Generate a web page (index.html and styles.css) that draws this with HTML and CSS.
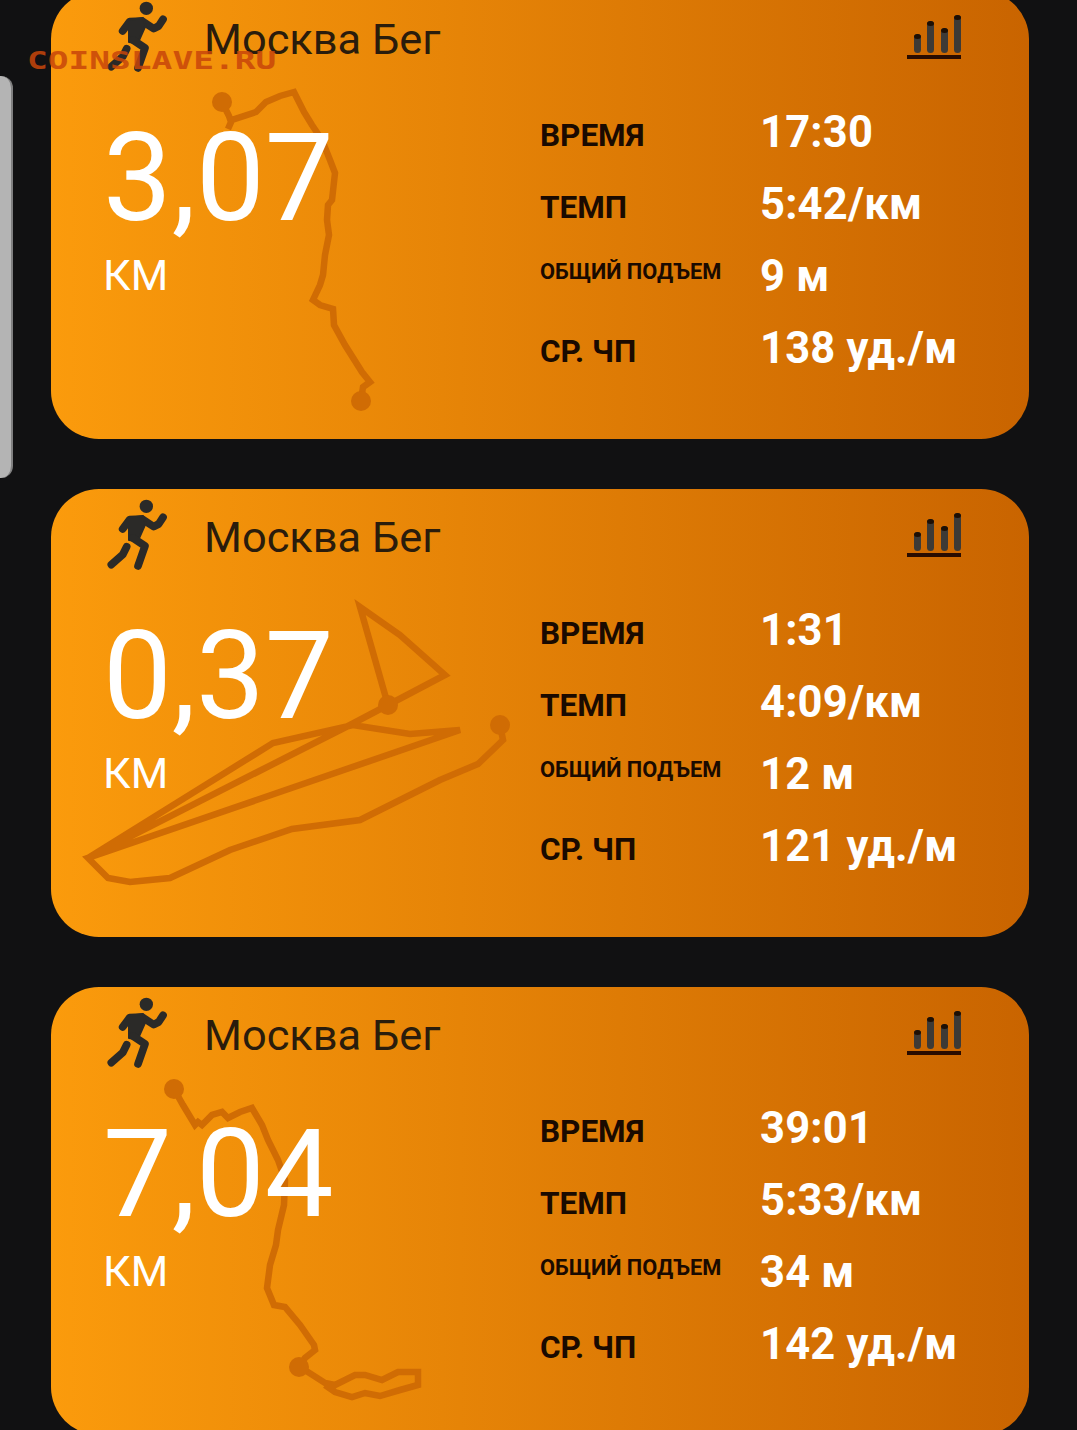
FILE: index.html
```html
<!DOCTYPE html>
<html>
<head>
    <meta charset="utf-8" />
    <title>Москва Бег</title>
    <link rel="stylesheet" href="styles.css">
</head>
<body class="body">
    <div class="sideHandle"></div>
    <div class="watermark">COINSLAVE.RU</div>

    <div class="list">
        <div class="card">
            <svg class="route" viewBox="51 -9 978 448">
                <polyline points="222,102 229,116 231,122 228,129 232,120 256,112 266,102 280,96 294,92 304,112 312,125 322,140 330,160 335,173 332,200 328,205 327,220 329,235 325,255 323,275 320,285 313,300 320,305 333,309 334,325 345,345 362,372 370,382 363,387 361,400" />
                <circle cx="222" cy="102" r="10" />
                <circle cx="361" cy="401" r="10" />
            </svg>
            <div class="cardHead">
                <svg class="runner" viewBox="50 25 180 216">
                    <circle class="runnerHead" cx="168" cy="47" r="20" />
                    <path class="limb" d="M97 115 L118 87 L155 85 L190 108 L205 100 L218 80" />
                    <polygon class="runnerBody" points="116,82 158,76 166,98 142,152 116,148" />
                    <path class="limb" d="M128 142 L164 166 L143 226" />
                    <path class="limb" d="M109 168 L97 192 L63 222" />
                </svg>
                <span class="title">Москва Бег</span>
                <svg class="chartIcon" viewBox="0 0 54 44">
                    <rect class="bar" x="7" y="19" width="7" height="19" rx="3.5" />
                    <rect class="barCap" x="7" y="19" width="7" height="5" rx="3.5" />
                    <rect class="bar" x="20" y="6" width="7" height="32" rx="3.5" />
                    <rect class="barCap" x="20" y="6" width="7" height="5" rx="3.5" />
                    <rect class="bar" x="34" y="13" width="7" height="25" rx="3.5" />
                    <rect class="barCap" x="34" y="13" width="7" height="5" rx="3.5" />
                    <rect class="bar" x="47" y="0" width="7" height="38" rx="3.5" />
                    <rect class="barCap" x="47" y="0" width="7" height="5" rx="3.5" />
                    <rect class="baseLine" x="0" y="40" width="54" height="4" />
                </svg>
            </div>
            <div class="cardBody">
                <div class="distance">
                    <div class="distanceValue">3,07</div>
                    <div class="distanceUnit">КМ</div>
                </div>
                <div class="stats">
                    <div class="label">ВРЕМЯ</div><div class="value">17:30</div>
                    <div class="label">ТЕМП</div><div class="value">5:42/км</div>
                    <div class="label small">ОБЩИЙ ПОДЪЕМ</div><div class="value">9 м</div>
                    <div class="label">СР. ЧП</div><div class="value">138 уд./м</div>
                </div>
            </div>
        </div>

        <div class="card">
            <svg class="route" viewBox="51 489 978 448">
                <polyline points="500,725 503,740 478,764 440,780 360,820 292,829 230,850 170,878 130,882 108,878 88,858 460,730 410,734 353,725 273,743 88,858 350,725 388,705 360,607 400,635 445,675 388,705" />
                <circle cx="500" cy="725" r="10" />
                <circle cx="388" cy="705" r="10" />
            </svg>
            <div class="cardHead">
                <svg class="runner" viewBox="50 25 180 216">
                    <circle class="runnerHead" cx="168" cy="47" r="20" />
                    <path class="limb" d="M97 115 L118 87 L155 85 L190 108 L205 100 L218 80" />
                    <polygon class="runnerBody" points="116,82 158,76 166,98 142,152 116,148" />
                    <path class="limb" d="M128 142 L164 166 L143 226" />
                    <path class="limb" d="M109 168 L97 192 L63 222" />
                </svg>
                <span class="title">Москва Бег</span>
                <svg class="chartIcon" viewBox="0 0 54 44">
                    <rect class="bar" x="7" y="19" width="7" height="19" rx="3.5" />
                    <rect class="barCap" x="7" y="19" width="7" height="5" rx="3.5" />
                    <rect class="bar" x="20" y="6" width="7" height="32" rx="3.5" />
                    <rect class="barCap" x="20" y="6" width="7" height="5" rx="3.5" />
                    <rect class="bar" x="34" y="13" width="7" height="25" rx="3.5" />
                    <rect class="barCap" x="34" y="13" width="7" height="5" rx="3.5" />
                    <rect class="bar" x="47" y="0" width="7" height="38" rx="3.5" />
                    <rect class="barCap" x="47" y="0" width="7" height="5" rx="3.5" />
                    <rect class="baseLine" x="0" y="40" width="54" height="4" />
                </svg>
            </div>
            <div class="cardBody">
                <div class="distance">
                    <div class="distanceValue">0,37</div>
                    <div class="distanceUnit">КМ</div>
                </div>
                <div class="stats">
                    <div class="label">ВРЕМЯ</div><div class="value">1:31</div>
                    <div class="label">ТЕМП</div><div class="value">4:09/км</div>
                    <div class="label small">ОБЩИЙ ПОДЪЕМ</div><div class="value">12 м</div>
                    <div class="label">СР. ЧП</div><div class="value">121 уд./м</div>
                </div>
            </div>
        </div>

        <div class="card">
            <svg class="route" viewBox="51 987 978 448">
                <polyline points="174,1089 183,1105 195,1125 198,1122 202,1125 212,1115 222,1112 228,1118 240,1112 252,1108 262,1125 268,1140 278,1160 285,1180 284,1205 278,1230 276,1245 270,1265 267,1288 274,1305 285,1307 300,1325 314,1345 315,1350 305,1358 300,1367 325,1383 335,1385 355,1375 365,1375 382,1380 398,1372 418,1372 418,1385 400,1390 380,1396 365,1393 352,1397 335,1392 325,1385" />
                <circle cx="174" cy="1089" r="10" />
                <circle cx="299" cy="1367" r="10" />
            </svg>
            <div class="cardHead">
                <svg class="runner" viewBox="50 25 180 216">
                    <circle class="runnerHead" cx="168" cy="47" r="20" />
                    <path class="limb" d="M97 115 L118 87 L155 85 L190 108 L205 100 L218 80" />
                    <polygon class="runnerBody" points="116,82 158,76 166,98 142,152 116,148" />
                    <path class="limb" d="M128 142 L164 166 L143 226" />
                    <path class="limb" d="M109 168 L97 192 L63 222" />
                </svg>
                <span class="title">Москва Бег</span>
                <svg class="chartIcon" viewBox="0 0 54 44">
                    <rect class="bar" x="7" y="19" width="7" height="19" rx="3.5" />
                    <rect class="barCap" x="7" y="19" width="7" height="5" rx="3.5" />
                    <rect class="bar" x="20" y="6" width="7" height="32" rx="3.5" />
                    <rect class="barCap" x="20" y="6" width="7" height="5" rx="3.5" />
                    <rect class="bar" x="34" y="13" width="7" height="25" rx="3.5" />
                    <rect class="barCap" x="34" y="13" width="7" height="5" rx="3.5" />
                    <rect class="bar" x="47" y="0" width="7" height="38" rx="3.5" />
                    <rect class="barCap" x="47" y="0" width="7" height="5" rx="3.5" />
                    <rect class="baseLine" x="0" y="40" width="54" height="4" />
                </svg>
            </div>
            <div class="cardBody">
                <div class="distance">
                    <div class="distanceValue">7,04</div>
                    <div class="distanceUnit">КМ</div>
                </div>
                <div class="stats">
                    <div class="label">ВРЕМЯ</div><div class="value">39:01</div>
                    <div class="label">ТЕМП</div><div class="value">5:33/км</div>
                    <div class="label small">ОБЩИЙ ПОДЪЕМ</div><div class="value">34 м</div>
                    <div class="label">СР. ЧП</div><div class="value">142 уд./м</div>
                </div>
            </div>
        </div>
    </div>
</body>
</html>
```

FILE: styles.css
```css
html {
    overflow: hidden;
}
.body {
    margin: 0;
    height: 1430px;
    overflow: hidden;
    background-color: #111112;
    font-family: Roboto, sans-serif;
}
.sideHandle {
    position: absolute;
    left: 0;
    top: 76px;
    width: 11px;
    height: 402px;
    background-color: #b4b4b4;
    border-right: 2px solid #808080;
    border-radius: 0 12px 12px 0;
}
.watermark {
    position: absolute;
    left: 27px;
    top: 46px;
    z-index: 5;
    font-family: "DejaVu Sans Mono", monospace;
    font-weight: bold;
    font-size: 25px;
    line-height: 30px;
    color: #c8460a;
    opacity: 0.85;
    transform: scaleX(1.38);
    transform-origin: left center;
}
.list {
    display: flex;
    flex-direction: column;
    gap: 50px;
    margin-top: -9px;
    margin-left: 51px;
    width: 978px;
}
.card {
    position: relative;
    flex: none;
    height: 448px;
    border-radius: 48px;
    background: linear-gradient(90deg, #fb9b0c, #c96400);
}
.route {
    position: absolute;
    left: 0;
    top: 0;
    width: 978px;
    height: 448px;
}
.route polyline {
    fill: none;
    stroke: #d06c04;
    stroke-width: 6.5;
    stroke-linejoin: miter;
}
.route circle {
    fill: #d06c04;
}
.cardHead {
    position: relative;
    display: flex;
    align-items: center;
    height: 90px;
    padding-left: 56px;
}
.runner {
    width: 60px;
    height: 72px;
    margin-right: 37px;
    margin-top: 2px;
}
.runnerHead {
    fill: #2b2a28;
}
.runnerBody {
    fill: #2b2a28;
    stroke: #2b2a28;
    stroke-width: 6;
    stroke-linejoin: round;
}
.limb {
    fill: none;
    stroke: #2b2a28;
    stroke-width: 23;
    stroke-linecap: round;
    stroke-linejoin: round;
}
.title {
    flex: 1;
    position: relative;
    top: 3px;
    font-size: 43.4px;
    color: #2a1c0c;
}
.chartIcon {
    width: 54px;
    height: 44px;
    margin-right: 68px;
    margin-top: 2px;
}
.bar {
    fill: #3d3a36;
}
.barCap {
    fill: #1e0f04;
}
.baseLine {
    fill: #2a0c00;
}
.cardBody {
    position: relative;
    display: flex;
}
.distance {
    width: 489px;
    padding-left: 52px;
    padding-top: 27px;
    box-sizing: border-box;
    color: white;
}
.distanceValue {
    font-size: 122.5px;
    line-height: 140px;
}
.distanceUnit {
    font-size: 43px;
    line-height: 54px;
}
.stats {
    display: grid;
    grid-template-columns: 220px auto;
    grid-auto-rows: 72px;
    align-items: center;
    margin-top: 18px;
}
.label {
    font-weight: bold;
    font-size: 31.5px;
    color: #1a0a00;
}
.small {
    font-size: 21.8px;
    margin-bottom: 16px;
}
.value {
    font-weight: bold;
    font-size: 43.5px;
    letter-spacing: 0.2px;
    margin-bottom: 6px;
    color: white;
}
```
